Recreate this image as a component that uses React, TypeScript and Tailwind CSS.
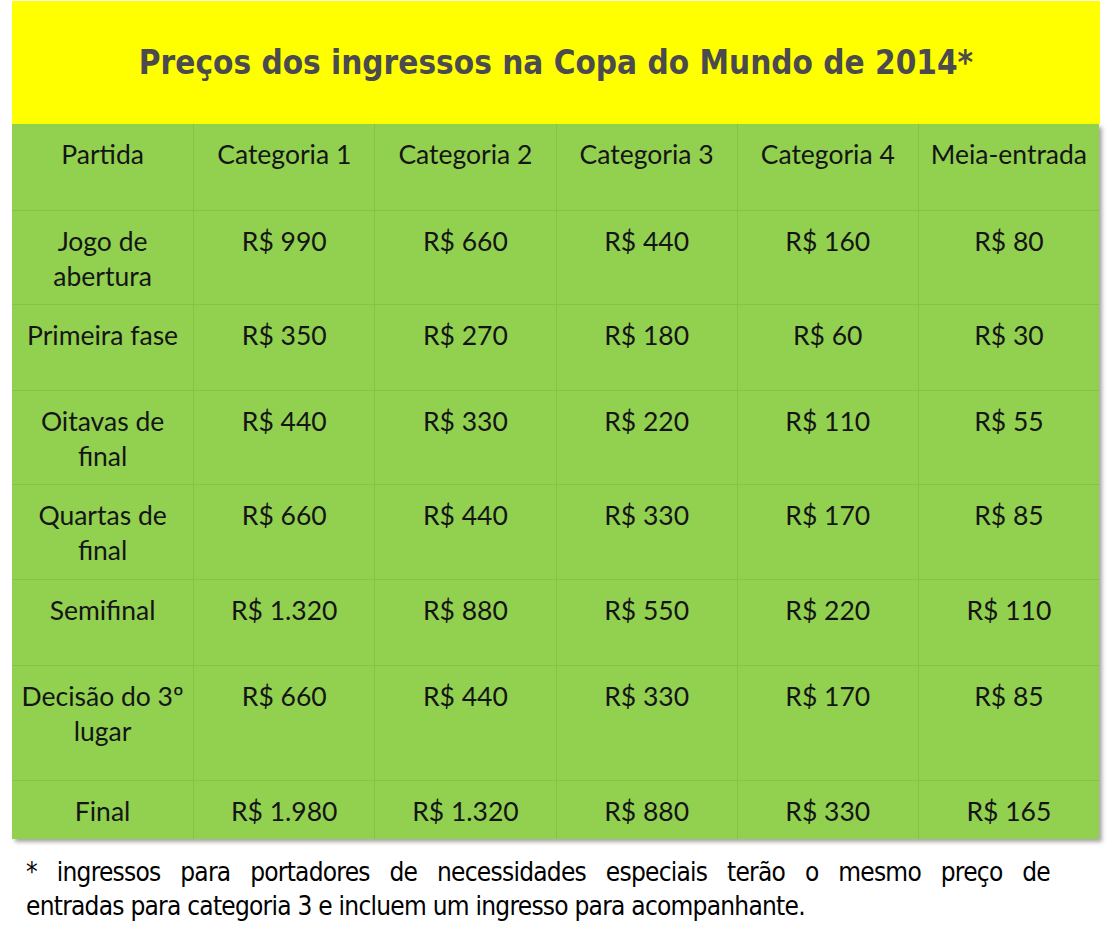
import React from "react";

const header = ["Partida", "Categoria 1", "Categoria 2", "Categoria 3", "Categoria 4", "Meia-entrada"];

const rows: { h: string; cells: string[] }[] = [
  { h: "h-[94px]", cells: ["Jogo de abertura", "R$ 990", "R$ 660", "R$ 440", "R$ 160", "R$ 80"] },
  { h: "h-[86px]", cells: ["Primeira fase", "R$ 350", "R$ 270", "R$ 180", "R$ 60", "R$ 30"] },
  { h: "h-[94px]", cells: ["Oitavas de final", "R$ 440", "R$ 330", "R$ 220", "R$ 110", "R$ 55"] },
  { h: "h-[95px]", cells: ["Quartas de final", "R$ 660", "R$ 440", "R$ 330", "R$ 170", "R$ 85"] },
  { h: "h-[86px]", cells: ["Semifinal", "R$ 1.320", "R$ 880", "R$ 550", "R$ 220", "R$ 110"] },
  { h: "h-[115px]", cells: ["Decisão do 3º lugar", "R$ 660", "R$ 440", "R$ 330", "R$ 170", "R$ 85"] },
  { h: "h-[59px]", cells: ["Final", "R$ 1.980", "R$ 1.320", "R$ 880", "R$ 330", "R$ 165"] },
];

function Row({ cells, h }: { cells: string[]; h: string }) {
  return (
    <div className={`grid grid-cols-6 ${h} border-t border-[#86c246] first:border-t-0`}>
      {cells.map((c, i) => (
        <div
          key={i}
          className={`px-[8px] pt-[13px] text-center leading-[35px] text-[26.5px] text-[#151515] ${i > 0 ? "border-l border-[#86c246]" : ""}`}
        >
          {c}
        </div>
      ))}
    </div>
  );
}

export default function App() {
  return (
    <div className="w-[1111px] h-[933px] bg-white overflow-hidden">
      <div className="pl-[12px] pt-[1px]">
        <div
          className="w-[1088px] h-[123px] bg-[#ffff00] flex items-center justify-center text-[#4a4a4f] font-bold text-[33px]"
          style={{ fontFamily: '"DejaVu Sans Condensed", "DejaVu Sans", sans-serif' }}
        >
          Preços dos ingressos na Copa do Mundo de 2014*
        </div>
        <div
          className="w-[1087px] bg-[#92d050] shadow-[3px_3px_4px_rgba(0,0,0,0.35)]"
          style={{ fontFamily: 'Lato, "Noto Sans", sans-serif' }}
        >
          <Row cells={header} h="h-[86px]" />
          {rows.map((r, i) => (
            <Row key={i} cells={r.cells} h={r.h} />
          ))}
        </div>
      </div>
      <div
        className="ml-[26px] mt-[16px] w-[1024px] text-[26px] tracking-[-0.75px] leading-[34px] text-black"
        style={{ fontFamily: '"DejaVu Sans Condensed", "DejaVu Sans", sans-serif' }}
      >
        <div className="text-justify [text-align-last:justify]">
          * ingressos para portadores de necessidades especiais terão o mesmo preço de
        </div>
        <div>entradas para categoria 3 e incluem um ingresso para acompanhante.</div>
      </div>
    </div>
  );
}
